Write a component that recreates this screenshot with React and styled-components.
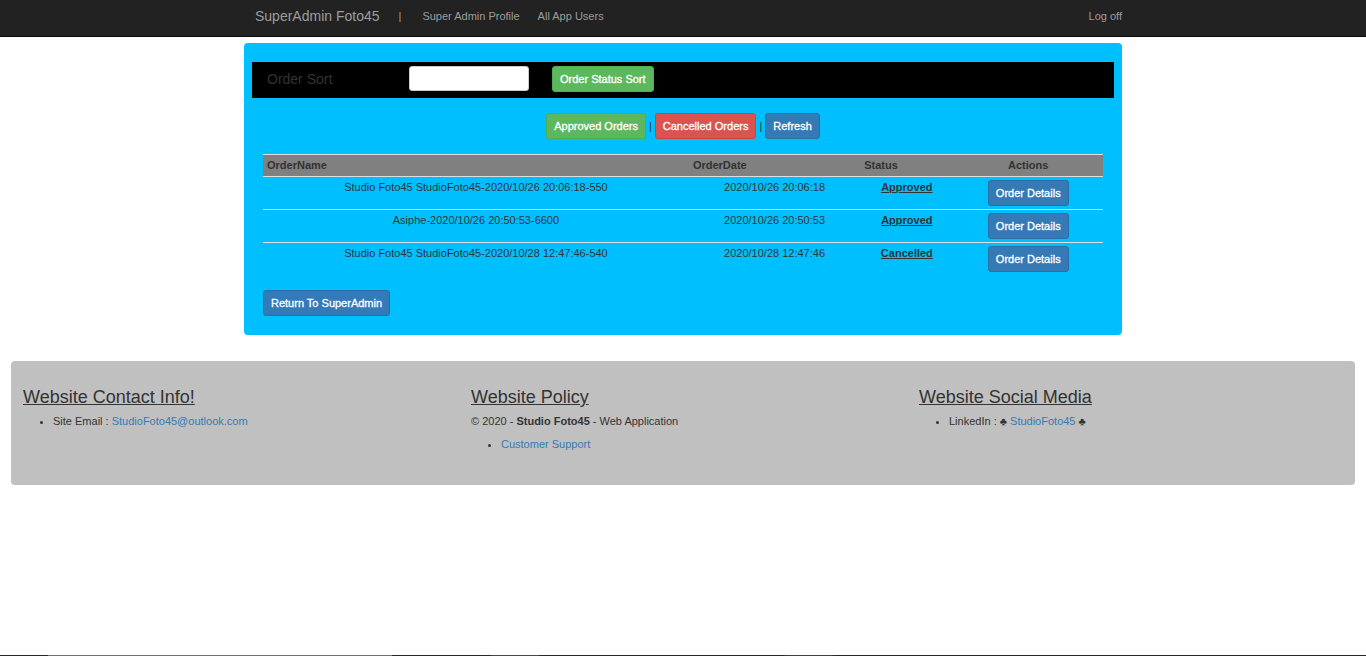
import React from "react";
import styled, { createGlobalStyle } from "styled-components";

const GlobalStyle = createGlobalStyle`
  *, *::before, *::after { box-sizing: border-box; }
  body {
    margin: 0;
    background: #fff;
    color: #333;
    font: 11px/15px "Liberation Sans", Arial, sans-serif;
  }
  button, input { font: inherit; }
`;

const Page = styled.div`
  min-height: 100vh;
  display: flex;
  flex-direction: column;
`;

const NavBar = styled.header`
  background: #222;
  border-bottom: 1px solid #080808;
`;

const NavInner = styled.div`
  max-width: 878px;
  min-height: 36px;
  padding-bottom: 4px;
  margin: 0 auto;
  display: flex;
  align-items: center;
`;

const Brand = styled.a`
  padding: 0 9px 0 11px;
  font-size: 14px;
  color: #9d9d9d;
  text-decoration: none;
`;

const NavList = styled.nav`
  flex: 1;
  display: flex;
  align-items: center;
`;

const NavDivider = styled.span`
  padding: 0 12px 0 10px;
  color: #9d9d9d;
`;

const NavLink = styled.a`
  padding: ${(p) => (p.$end ? "0" : "0 9px")};
  margin-left: ${(p) => (p.$end ? "auto" : "0")};
  color: #9d9d9d;
  text-decoration: none;
  &:hover { color: #fff; }
`;

const Panel = styled.main`
  width: 100%;
  max-width: 878px;
  margin: 6px auto 26px;
  padding: 19px 8px;
  border-radius: 4px;
  background: #00bfff;
`;

const SortBar = styled.form`
  display: flex;
  align-items: flex-start;
  padding: 4px 15px;
  min-height: 36px;
  background: #000;
`;

const SortLabel = styled.label`
  width: 142px;
  font-size: 14px;
  line-height: 26px;
`;

const SortInput = styled.input`
  width: 120px;
  height: 25px;
  margin-right: 23px;
  padding: 4px 9px;
  border: 1px solid #ccc;
  border-radius: 3px;
  background: #fff;
`;

const tones = {
  green: ["#5cb85c", "#4cae4c"],
  red: ["#d9534f", "#d43f3a"],
  blue: ["#337ab7", "#2e6da4"],
};

const Button = styled.button`
  height: 26px;
  padding: 0 7px;
  border: 1px solid ${(p) => tones[p.$tone][1]};
  border-radius: 3px;
  background: ${(p) => tones[p.$tone][0]};
  color: #fff;
  line-height: 15px;
  -webkit-text-stroke: 0.3px #fff;
  white-space: nowrap;
  cursor: pointer;
`;

const FilterRow = styled.div`
  display: flex;
  justify-content: center;
  align-items: center;
  gap: 3px;
  margin: 15px 0;
`;

const PanelBody = styled.div`
  padding: 0 11px;
`;

const OrdersTable = styled.table`
  width: 100%;
  margin-bottom: 15px;
  border-collapse: separate;
  border-spacing: 0;
  table-layout: fixed;
`;

const Col = styled.col`
  width: ${(p) => p.$share}%;
`;

const HeadCell = styled.th`
  padding: 3px 4px;
  border-top: 1px solid #ddd;
  border-bottom: 1px solid #ddd;
  background: #808080;
  text-align: ${(p) => p.$align || "left"};
`;

const Cell = styled.td`
  padding: 3px 4px;
  text-align: center;
  vertical-align: top;
  tr + tr > & { border-top: 1px solid #ddd; }
  button { display: block; margin: 0 auto; }
`;

const Status = styled.strong`
  text-decoration: underline;
`;

const Footer = styled.footer`
  display: grid;
  grid-template-columns: repeat(3, 1fr);
  min-height: 124px;
  margin: 0 11px;
  padding: 26px 0 23px;
  border-radius: 4px;
  background: #c0c0c0;
`;

const FooterColumn = styled.section`
  padding: 0 12px;
`;

const FooterTitle = styled.h3`
  margin: 0 0 7px;
  font-size: 18px;
  line-height: 20px;
  font-weight: 400;
  text-decoration: underline;
`;

const FooterText = styled.p`
  margin: 0 0 8px;
`;

const FooterList = styled.ul`
  margin: 0;
  padding-left: 30px;
`;

const FooterLink = styled.a`
  color: #337ab7;
  text-decoration: none;
`;

const BottomStrip = styled.div`
  display: flex;
  height: 1px;
  margin-top: auto;
  background: #202d28;
`;

const StripPart = styled.span`
  flex: ${(p) => p.$size};
  background: ${(p) => p.$color || "transparent"};
`;

const orders = [
  ["Studio Foto45 StudioFoto45-2020/10/26 20:06:18-550", "2020/10/26 20:06:18", "Approved"],
  ["Asiphe-2020/10/26 20:50:53-6600", "2020/10/26 20:50:53", "Approved"],
  ["Studio Foto45 StudioFoto45-2020/10/28 12:47:46-540", "2020/10/28 12:47:46", "Cancelled"],
];

export default function App() {
  return (
    <Page>
      <GlobalStyle />
      <NavBar>
        <NavInner>
          <Brand href="#">SuperAdmin Foto45</Brand>
          <NavList>
            <NavDivider>|</NavDivider>
            <NavLink href="#">Super Admin Profile</NavLink>
            <NavLink href="#">All App Users</NavLink>
            <NavLink href="#" $end>Log off</NavLink>
          </NavList>
        </NavInner>
      </NavBar>

      <Panel>
        <SortBar onSubmit={(e) => e.preventDefault()}>
          <SortLabel htmlFor="order-sort">Order Sort</SortLabel>
          <SortInput id="order-sort" type="text" />
          <Button $tone="green" type="submit">Order Status Sort</Button>
        </SortBar>
        <PanelBody>
          <FilterRow>
            <Button $tone="green">Approved Orders</Button>
            <span>|</span>
            <Button $tone="red">Cancelled Orders</Button>
            <span>|</span>
            <Button $tone="blue">Refresh</Button>
          </FilterRow>
          <OrdersTable>
            <colgroup>
              <Col $share={50.7} />
              <Col $share={20.4} />
              <Col $share={11.1} />
              <Col $share={17.8} />
            </colgroup>
            <thead>
              <tr>
                <HeadCell>OrderName</HeadCell>
                <HeadCell>OrderDate</HeadCell>
                <HeadCell>Status</HeadCell>
                <HeadCell $align="center">Actions</HeadCell>
              </tr>
            </thead>
            <tbody>
              {orders.map(([name, date, status]) => (
                <tr key={name}>
                  <Cell>{name}</Cell>
                  <Cell>{date}</Cell>
                  <Cell><Status>{status}</Status></Cell>
                  <Cell><Button $tone="blue">Order Details</Button></Cell>
                </tr>
              ))}
            </tbody>
          </OrdersTable>
          <Button $tone="blue">Return To SuperAdmin</Button>
        </PanelBody>
      </Panel>

      <Footer>
        <FooterColumn>
          <FooterTitle>Website Contact Info!</FooterTitle>
          <FooterList>
            <li>Site Email : <FooterLink href="mailto:StudioFoto45@outlook.com">StudioFoto45@outlook.com</FooterLink></li>
          </FooterList>
        </FooterColumn>
        <FooterColumn>
          <FooterTitle>Website Policy</FooterTitle>
          <FooterText>© 2020 - <strong>Studio Foto45</strong> - Web Application</FooterText>
          <FooterList>
            <li><FooterLink href="#">Customer Support</FooterLink></li>
          </FooterList>
        </FooterColumn>
        <FooterColumn>
          <FooterTitle>Website Social Media</FooterTitle>
          <FooterList>
            <li>LinkedIn : ♣ <FooterLink href="#">StudioFoto45</FooterLink> ♣</li>
          </FooterList>
        </FooterColumn>
      </Footer>

      <BottomStrip>
        <StripPart $size={48} />
        <StripPart $size={344} $color="#66736c" />
        <StripPart $size={99} />
        <StripPart $size={48} $color="#3b4f45" />
        <StripPart $size={246} />
        <StripPart $size={48} $color="#35443d" />
        <StripPart $size={533} />
      </BottomStrip>
    </Page>
  );
}
